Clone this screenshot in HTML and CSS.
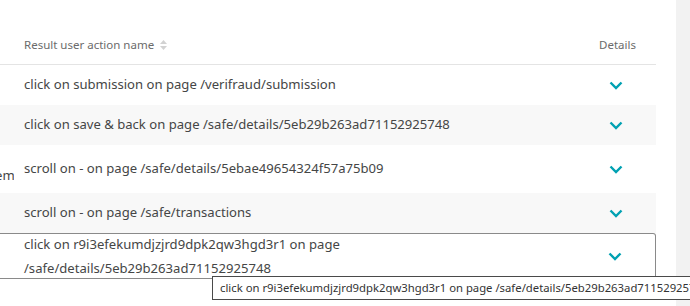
FILE: index.html
```html
<!DOCTYPE html>
<html lang="en">
<head>
    <meta charset="UTF-8">
    <title>Result user actions</title>
    <link rel="stylesheet" href="styles.css">
</head>
<body>

<div class="page">
    <div class="table">
        <div class="row head">
            <div class="lead"></div>
            <div class="name">Result user action name
                <svg class="sort" width="7" height="10" viewBox="0 0 7 10">
                    <path d="M3.5 0 L7 4 H0 Z M3.5 10 L7 6 H0 Z" fill="#d2d2d2"/>
                </svg>
            </div>
            <div class="details">Details</div>
        </div>
        <div class="row">
            <div class="lead"></div>
            <div class="name">click on submission on page /verifraud/submission</div>
            <div class="details"><svg class="chev" width="14" height="9" viewBox="0 0 14 9"><path d="M1.5 1.5 L7 7 L12.5 1.5" fill="none" stroke="#00a1b2" stroke-width="2.4"/></svg></div>
        </div>
        <div class="row alt">
            <div class="lead"></div>
            <div class="name">click on save &amp; back on page /safe/details/5eb29b263ad71152925748</div>
            <div class="details"><svg class="chev" width="14" height="9" viewBox="0 0 14 9"><path d="M1.5 1.5 L7 7 L12.5 1.5" fill="none" stroke="#00a1b2" stroke-width="2.4"/></svg></div>
        </div>
        <div class="row tall">
            <div class="lead"><span>em</span></div>
            <div class="name">scroll on - on page /safe/details/5ebae49654324f57a75b09</div>
            <div class="details"><svg class="chev" width="14" height="9" viewBox="0 0 14 9"><path d="M1.5 1.5 L7 7 L12.5 1.5" fill="none" stroke="#00a1b2" stroke-width="2.4"/></svg></div>
        </div>
        <div class="row alt">
            <div class="lead"></div>
            <div class="name">scroll on - on page /safe/transactions</div>
            <div class="details"><svg class="chev" width="14" height="9" viewBox="0 0 14 9"><path d="M1.5 1.5 L7 7 L12.5 1.5" fill="none" stroke="#00a1b2" stroke-width="2.4"/></svg></div>
        </div>
        <div class="row hovered">
            <div class="lead"></div>
            <div class="name wrap">click on r9i3efekumdjzjrd9dpk2qw3hgd3r1 on page /safe/details/5eb29b263ad71152925748</div>
            <div class="details"><svg class="chev" width="14" height="9" viewBox="0 0 14 9"><path d="M1.5 1.5 L7 7 L12.5 1.5" fill="none" stroke="#00a1b2" stroke-width="2.4"/></svg></div>
            <div class="tooltip">click on r9i3efekumdjzjrd9dpk2qw3hgd3r1 on page /safe/details/5eb29b263ad71152925748</div>
        </div>
    </div>
    <div class="scrollbar"></div>
</div>

</body>
</html>
```

FILE: styles.css
```css
body {
    margin: 0;
    background: #fff;
    font-family: "Noto Sans", sans-serif;
    color: #454646;
    overflow: hidden;
}
.page {
    display: flex;
    gap: 20px;
    height: 306px;
}
.table {
    width: 656px;
}
.scrollbar {
    width: 14px;
    background: #f2f2f2;
}
.row {
    display: flex;
    align-items: center;
    height: 40px;
    font-size: 13.1px;
    position: relative;
}
.row.alt { background: #f8f8f8; }
.row.tall { height: 48px; }
.head {
    height: 64px;
    align-items: flex-end;
    border-bottom: 1px solid #e4e4e4;
    font-size: 11.5px;
    color: #6b6b6b;
}
.head .name, .head .details {
    padding-bottom: 12px;
}
.lead {
    width: 14px;
    align-self: stretch;
    overflow: hidden;
    display: flex;
    align-items: flex-end;
}
.lead span {
    padding-bottom: 9px;
    margin-left: -5px;
}
.name {
    flex: 1;
    padding-left: 10px;
    padding-bottom: 2px;
    white-space: nowrap;
}
.name.wrap {
    white-space: normal;
    line-height: 24px;
    width: 330px;
    flex: none;
    margin-right: auto;
    padding-bottom: 0;
}
.sort {
    margin-left: 3px;
    vertical-align: -1px;
}
.details {
    width: 60px;
    padding-right: 20px;
    text-align: right;
}
.chev {
    margin-right: 13px;
    display: inline-block;
}
.hovered {
    height: 44px;
    border: 1px solid #8a8a8a;
    border-left: none;
    border-top-right-radius: 3px;
}
.tooltip {
    position: absolute;
    left: 212px;
    top: 42px;
    white-space: nowrap;
    background: #fff;
    border: 1px solid #4a4a4a;
    padding: 3px 7px;
    font-size: 11.3px;
    color: #333;
    line-height: 16px;
}
```
